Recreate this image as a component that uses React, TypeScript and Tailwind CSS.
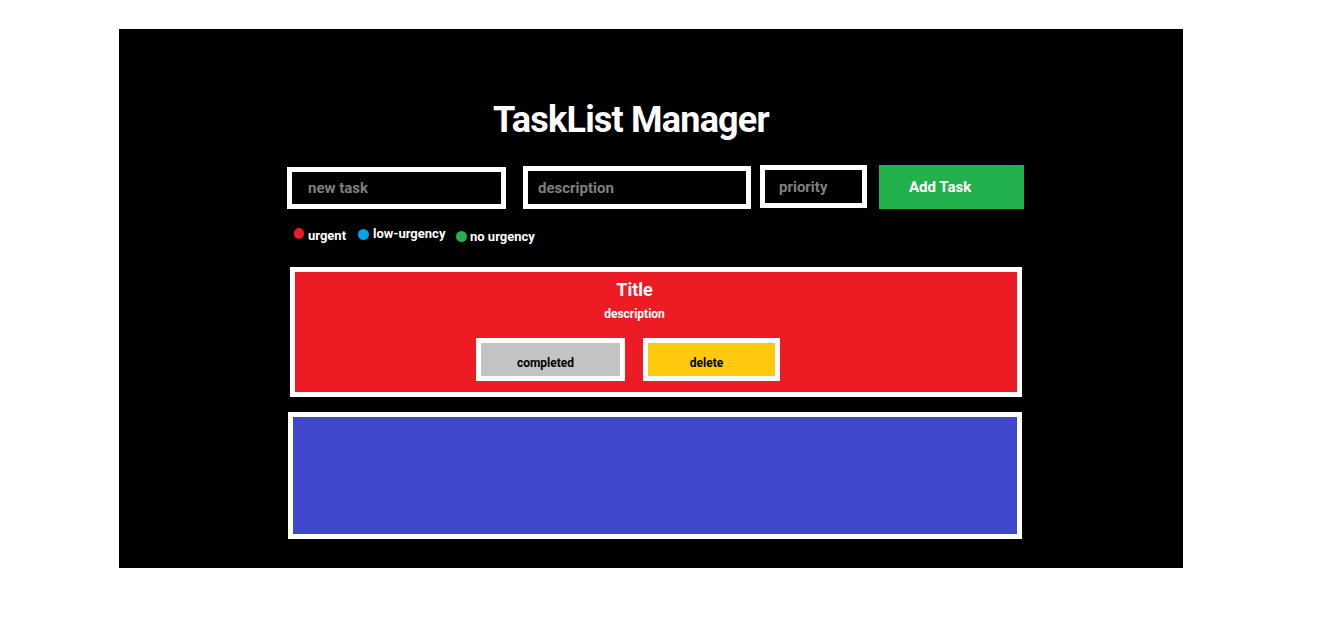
export default function App() {
  return (
    <div className="min-h-screen bg-white pt-[29px] pl-[119px] font-['Roboto',sans-serif]">
      <div className="w-[1064px] h-[539px] bg-black pt-[73px] pl-[168px]">
        <h1 className="ml-[206px] text-[36px] leading-[36px] tracking-[-0.8px] font-bold text-white">TaskList Manager</h1>

        {/* add task form */}
        <div className="mt-[27px] flex items-start">
          <input
            placeholder="new task"
            className="mt-[2px] w-[219px] h-[42px] border-[5px] border-white bg-black pl-[16px] text-[15px] font-bold text-white placeholder:text-[#7f7f7f] outline-none"
          />
          <input
            placeholder="description"
            className="ml-[17px] mt-[1px] w-[228px] h-[43px] border-[5px] border-white bg-black pl-[10px] text-[15px] font-bold text-white placeholder:text-[#7f7f7f] outline-none"
          />
          <input
            placeholder="priority"
            className="ml-[9px] w-[107px] h-[43px] border-[5px] border-white bg-black pl-[14px] text-[15px] font-bold text-white placeholder:text-[#7f7f7f] outline-none"
          />
          <button className="ml-[12px] w-[145px] h-[44px] bg-[#22b14c] pl-[30px] pt-[1px] text-left text-[15px] font-bold text-white">
            Add Task
          </button>
        </div>

        {/* legend */}
        <div className="mt-[18px] ml-[7px] flex items-start h-[15px] text-[13px] leading-[13px] font-bold text-white">
          <div className="w-[64px] flex items-start">
            <span className="mt-[1px] w-[10px] h-[11px] rounded-full bg-[#ed1c24]" />
            <span className="ml-[4px] mt-[2px]">urgent</span>
          </div>
          <div className="w-[98px] flex items-start">
            <span className="mt-[2px] w-[11px] h-[11px] rounded-full bg-[#00a2e8]" />
            <span className="ml-[4px]">low-urgency</span>
          </div>
          <div className="flex items-start">
            <span className="mt-[4px] w-[11px] h-[11px] rounded-full bg-[#22b14c]" />
            <span className="ml-[3px] mt-[3px]">no urgency</span>
          </div>
        </div>

        {/* task cards */}
        <div className="mt-[25px] ml-[3px] w-[732px] h-[130px] border-[5px] border-white bg-[#ed1c24] flex flex-col items-center pt-[9px] pr-[43px]">
          <div className="text-[18px] leading-[18px] font-bold text-white">Title</div>
          <div className="mt-[9px] text-[12px] leading-[12px] font-bold text-white">description</div>
          <div className="mt-[18px] flex gap-[18px] pr-[13px]">
            <button className="w-[149px] h-[43px] border-[5px] border-white bg-[#c3c3c3] pt-[6px] pr-[10px] text-[12px] font-bold text-black">
              completed
            </button>
            <button className="w-[137px] h-[43px] border-[5px] border-white bg-[#ffc90e] pt-[6px] pr-[10px] text-[12px] font-bold text-black">
              delete
            </button>
          </div>
        </div>

        <div className="mt-[15px] ml-[1px] w-[734px] h-[127px] border-[5px] border-white bg-[#3f48cc]" />
      </div>
    </div>
  )
}
